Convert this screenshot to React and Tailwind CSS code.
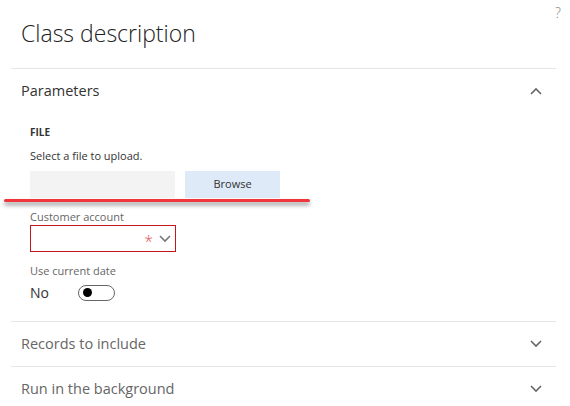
import React from "react";

const Chevron = ({ up = false, className = "" }) => (
  <svg width="12" height="8" viewBox="0 0 12 8" className={className}>
    <polyline
      points={up ? "1,7 6,2 11,7" : "1,1 6,6 11,1"}
      fill="none"
      stroke="currentColor"
      strokeWidth="1.6"
    />
  </svg>
);

const SectionHeader = ({ title, open = false, dim = false }) => (
  <div className="flex items-center justify-between h-[44px] pl-[10px] pr-[14px]">
    <span className={dim ? "text-[14.5px] text-[#666]" : "text-[14.5px] text-[#333]"}>{title}</span>
    <Chevron up={open} className="text-[#666]" />
  </div>
);

export default function App() {
  return (
    <div className="relative w-[570px] h-[406px] overflow-hidden bg-white font-['Open_Sans',sans-serif]">
      <span className="absolute top-[2px] right-[9px] text-[14px] text-[#888] font-light">?</span>

      {/* Title */}
      <div className="h-[68px] pl-[21px] pt-[18px]">
        <h1 className="text-[23px] leading-[30px] font-light text-[#222]">Class description</h1>
      </div>

      <div className="mx-[11px] w-[545px]">
        {/* Parameters */}
        <div className="border-t border-[#e6e6e6]">
          <SectionHeader title="Parameters" open />
          <div className="pl-[19px] pb-[18px]">
            <div className="pt-[13px] text-[10px] leading-[12px] font-bold text-[#333]">FILE</div>
            <div className="mt-[11px] text-[11px] leading-[14px] text-[#333]">Select a file to upload.</div>
            <div className="mt-[8px] flex gap-[10px]">
              <div className="w-[145px] h-[27px] bg-[#f3f3f3]" />
              <button className="w-[95px] h-[27px] bg-[#deeaf7] text-[11px] text-[#333]">Browse</button>
            </div>
            <div className="mt-[12px] text-[11px] leading-[14px] text-[#666]">Customer account</div>
            <div className="mt-[1px] w-[146px] h-[27px] border border-[#c4161c] flex items-center justify-end pr-[4px] gap-[6px]">
              <span className="text-[16px] leading-none text-[#e05656] mt-[5px] font-light">*</span>
              <Chevron className="text-[#777]" />
            </div>
            <div className="mt-[12px] text-[11px] leading-[14px] text-[#666]">Use current date</div>
            <div className="mt-[4px] flex items-center">
              <span className="w-[48px] text-[14px] text-[#333]">No</span>
              <div className="w-[37px] h-[16px] rounded-full border border-[#666] flex items-center pl-[4px]">
                <div className="w-[9px] h-[9px] rounded-full bg-black" />
              </div>
            </div>
          </div>
        </div>

        <div className="border-t border-[#e6e6e6]">
          <SectionHeader title="Records to include" dim />
        </div>
        <div className="border-t border-[#e6e6e6]">
          <SectionHeader title="Run in the background" dim />
        </div>
      </div>

      {/* red annotation underline */}
      <div className="absolute left-[4px] top-[199px] w-[306px] h-[3px] rounded-full bg-[#f0363c] shadow-[0_3px_4px_rgba(0,0,0,0.45)]" />
    </div>
  );
}
